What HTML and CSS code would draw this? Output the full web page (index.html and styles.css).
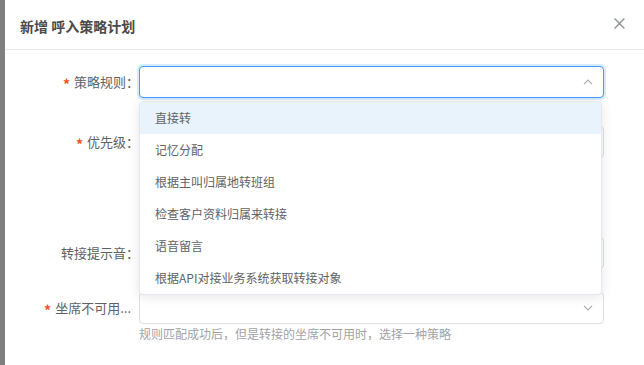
FILE: index.html
```html
<!DOCTYPE html>
<html lang="zh-CN">
<head>
<meta charset="utf-8">
<title>新增 呼入策略计划</title>
<link rel="stylesheet" href="styles.css">
</head>
<body>
<div class="page">
  <div class="mask-strip"></div>
  <div class="dialog">
    <div class="dialog-header">
      <span class="dialog-title">新增 呼入策略计划</span>
      <button class="close-btn" type="button" aria-label="关闭">
        <svg width="11" height="11" viewBox="0 0 11 11"><path d="M0.6 0.6 L10.4 10.4 M10.4 0.6 L0.6 10.4" stroke="#909399" stroke-width="1.4" fill="none"/></svg>
      </button>
    </div>
    <div class="dialog-body">
      <div class="form-item item-rule">
        <label class="label"><span class="req">*</span>策略规则：</label>
        <div class="control">
          <div class="select is-focus">
            <span class="select-arrow">
              <svg width="10" height="6" viewBox="0 0 10 6"><path d="M1 5.2 L5 1.2 L9 5.2" stroke="#a8abb2" stroke-width="1.2" fill="none"/></svg>
            </span>
          </div>
          <ul class="dropdown">
            <li class="option hover">直接转</li>
            <li class="option">记忆分配</li>
            <li class="option">根据主叫归属地转班组</li>
            <li class="option">检查客户资料归属来转接</li>
            <li class="option">语音留言</li>
            <li class="option">根据API对接业务系统获取转接对象</li>
          </ul>
        </div>
      </div>
      <div class="form-item item-priority">
        <label class="label"><span class="req">*</span>优先级：</label>
        <div class="control">
          <div class="select"></div>
        </div>
      </div>
      <div class="form-item item-sound">
        <label class="label">转接提示音：</label>
        <div class="control">
          <div class="select"></div>
        </div>
      </div>
      <div class="form-item item-agent">
        <label class="label label-trunc"><span class="req">*</span>坐席不可用...</label>
        <div class="control">
          <div class="select">
            <span class="select-arrow">
              <svg width="10" height="6" viewBox="0 0 10 6"><path d="M1 0.8 L5 4.8 L9 0.8" stroke="#a8abb2" stroke-width="1.2" fill="none"/></svg>
            </span>
          </div>
          <div class="help">规则匹配成功后，但是转接的坐席不可用时，选择一种策略</div>
        </div>
      </div>
    </div>
  </div>
</div>
</body>
</html>
```

FILE: styles.css
```css
* { box-sizing: border-box; }
html, body {
  margin: 0;
  padding: 0;
  width: 644px;
  height: 365px;
  overflow: hidden;
  background: #ffffff;
  font-family: "Noto Sans CJK SC", "Noto Sans", sans-serif;
}
.page {
  display: flex;
  height: 365px;
}
.mask-strip {
  width: 5px;
  flex: none;
  background: #7f7f7f;
}
.dialog {
  flex: 1;
  background: #ffffff;
  display: flex;
  flex-direction: column;
}
.dialog-header {
  height: 50px;
  border-bottom: 1px solid #e9e9e9;
  display: flex;
  justify-content: space-between;
  align-items: flex-start;
  padding: 14px 19px 0 15px;
}
.dialog-title {
  font-size: 14px;
  line-height: 24px;
  font-weight: 700;
  color: #4a4a4a;
}
.close-btn {
  border: 0;
  background: none;
  padding: 0;
  margin-top: 4px;
  width: 11px;
  height: 11px;
  display: flex;
}
.dialog-body {
  padding: 16px 0 0 35px;
  display: flex;
  flex-direction: column;
}
.form-item {
  display: flex;
  align-items: flex-start;
}
.item-priority { margin-top: 28px; }
.item-sound { margin-top: 79px; }
.item-agent { margin-top: 23px; }
.label {
  width: 99px;
  height: 32px;
  flex: none;
  text-align: right;
  font-size: 13px;
  line-height: 32px;
  color: #606266;
  padding-right: 0;
  white-space: nowrap;
}
.label-trunc { padding-right: 8px; }
.req {
  color: #f4511e;
  margin-right: 4px;
  line-height: 1;
  vertical-align: -3px;
  font-size: 14px;
  font-weight: 700;
}
.control {
  width: 465px;
  flex: none;
  position: relative;
}
.select {
  height: 32px;
  border: 1px solid #dcdfe6;
  border-radius: 4px;
  background: #fff;
  display: flex;
  justify-content: flex-end;
  align-items: center;
  padding-right: 10px;
}
.select.is-focus {
  border-color: #409eff;
  box-shadow: 0 0 0 2px rgba(64, 158, 255, 0.22);
}
.select-arrow {
  display: flex;
  width: 10px;
  height: 6px;
}
.dropdown {
  position: absolute;
  left: 0;
  top: 35px;
  width: 463px;
  margin: 0;
  padding: 0;
  list-style: none;
  background: #fff;
  border: 1px solid #e4e7ed;
  border-radius: 4px;
  box-shadow: 0 2px 12px rgba(0, 0, 0, 0.1);
  z-index: 10;
}
.option {
  height: 32px;
  line-height: 32px;
  padding-left: 15px;
  font-size: 12px;
  color: #606266;
  white-space: nowrap;
}
.option.hover { background: #e8f3fc; }
.help {
  font-size: 12px;
  line-height: 18px;
  color: #a0a3a8;
  padding-top: 1px;
}
```
